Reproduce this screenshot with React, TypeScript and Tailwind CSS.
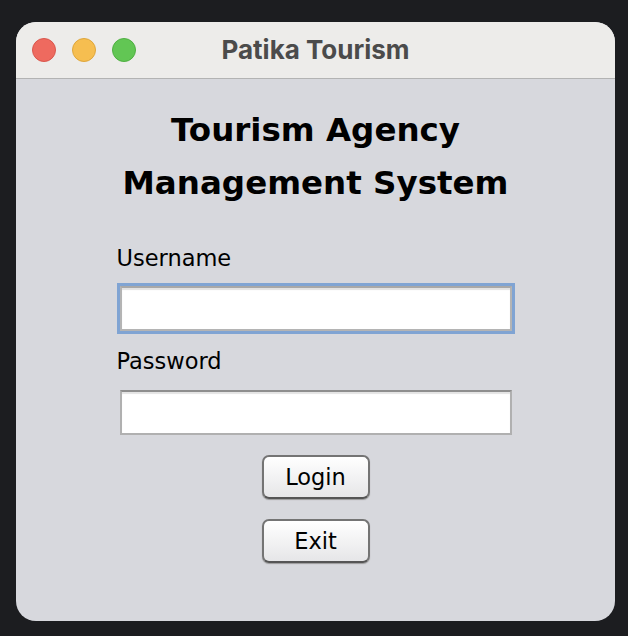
export default function App() {
  return (
    <div className="w-[628px] h-[636px] bg-[#1c1d20] pt-[22px] pl-[16px]">
      {/* Window */}
      <div className="w-[599px] h-[599px] rounded-[20px] overflow-hidden flex flex-col bg-[#d7d8dd]">
        {/* Title bar */}
        <div className="relative h-[57px] shrink-0 bg-[#edecea] border-b border-[#b3b3b3] flex items-center justify-center">
          <div className="absolute left-[16px] top-[16px] flex gap-[16px]">
            <span className="w-[24px] h-[24px] rounded-full bg-[#ee6a5f] border border-[#d9574d]" />
            <span className="w-[24px] h-[24px] rounded-full bg-[#f6be50] border border-[#dea63c]" />
            <span className="w-[24px] h-[24px] rounded-full bg-[#62c654] border border-[#4faf42]" />
          </div>
          <span className="font-['Inter',sans-serif] font-bold text-[26px] text-[#4b4b4b] leading-none">
            Patika Tourism
          </span>
        </div>

        {/* Body */}
        <div className="flex flex-col items-center pt-[25px] font-['DejaVu_Sans',sans-serif] text-black">
          <h1 className="font-bold text-[32.5px] leading-[53px] text-center">
            Tourism Agency
            <br />
            Management System
          </h1>

          <div className="w-[398px] mt-[35px] flex flex-col">
            <label className="text-[22.5px] leading-[26px]">Username</label>
            <div className="ml-[3px] mt-[15px] w-[392px] h-[45px] bg-white border-2 border-[#b4b4b4] border-t-[#a8a8a8] shadow-[0_0_0_3px_#80a4d3,inset_0_2px_1px_#e2e2e2]" />
            <label className="text-[22.5px] leading-[26px] mt-[17px]">Password</label>
            <div className="ml-[3px] mt-[16px] w-[392px] h-[45px] bg-white border-2 border-[#b0b0b0] border-t-[#8e8e8e] shadow-[inset_0_2px_1px_#e4e4e4]" />
          </div>

          <button className="mt-[20px] w-[108px] h-[44px] rounded-[7px] border-2 border-[#747474] border-b-[#555555] bg-linear-to-b from-white to-[#e6e6e8] shadow-[0_1px_1px_#9a9a9a] text-[22.5px] leading-none">
            Login
          </button>
          <button className="mt-[20px] w-[108px] h-[44px] rounded-[7px] border-2 border-[#747474] border-b-[#555555] bg-linear-to-b from-white to-[#e6e6e8] shadow-[0_1px_1px_#9a9a9a] text-[22.5px] leading-none">
            Exit
          </button>
        </div>
      </div>
    </div>
  );
}
